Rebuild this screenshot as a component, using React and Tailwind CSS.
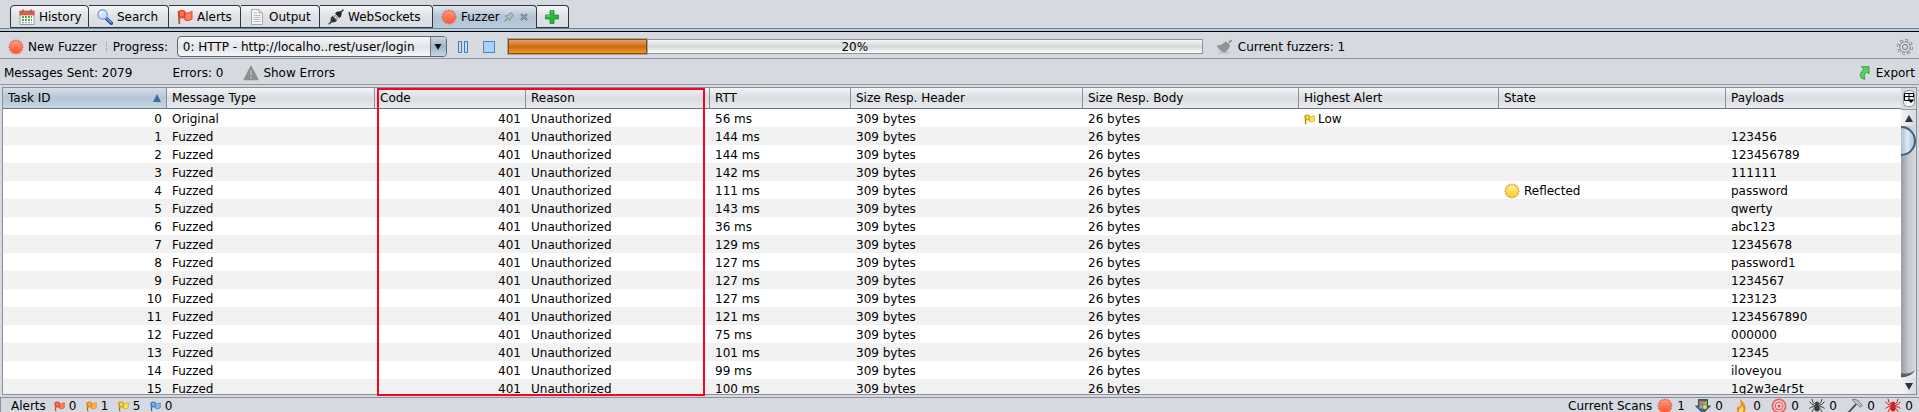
import React from "react";

const rows = [
  [0, "Original", 56, ""],
  [1, "Fuzzed", 144, "123456"],
  [2, "Fuzzed", 144, "123456789"],
  [3, "Fuzzed", 142, "111111"],
  [4, "Fuzzed", 111, "password"],
  [5, "Fuzzed", 143, "qwerty"],
  [6, "Fuzzed", 36, "abc123"],
  [7, "Fuzzed", 129, "12345678"],
  [8, "Fuzzed", 127, "password1"],
  [9, "Fuzzed", 127, "1234567"],
  [10, "Fuzzed", 127, "123123"],
  [11, "Fuzzed", 121, "1234567890"],
  [12, "Fuzzed", 75, "000000"],
  [13, "Fuzzed", 101, "12345"],
  [14, "Fuzzed", 99, "iloveyou"],
  [15, "Fuzzed", 100, "1q2w3e4r5t"],
];

const sunPoints = Array.from({ length: 32 }, (_, i) => {
  const r = i % 2 ? 6.2 : 8;
  const a = (i * Math.PI) / 16;
  return `${(8 + r * Math.cos(a)).toFixed(2)},${(8 + r * Math.sin(a)).toFixed(2)}`;
}).join(" ");

function Burst({ id, from, to, edge }) {
  return (
    <svg viewBox="0 0 16 16" className="size-4 shrink-0" aria-hidden="true">
      <defs>
        <linearGradient id={id} x1="0" y1="0" x2="0" y2="1">
          <stop offset="0" stopColor={from} />
          <stop offset="1" stopColor={to} />
        </linearGradient>
      </defs>
      <polygon points={sunPoints} fill={edge} />
      <circle cx="8" cy="8" r="5.9" fill={`url(#${id})`} />
    </svg>
  );
}

const RedBurst = ({ id }) => <Burst id={id} from="#ff9a80" to="#ff5534" edge="#e4664a" />;

function Flag({ light, dark, pole, className = "size-[11px]" }) {
  return (
    <svg viewBox="0 0 12 12" className={`shrink-0 ${className}`} aria-hidden="true">
      <path d="M1.2 1.5 1.8 11.2" stroke={pole} strokeWidth="1.3" fill="none" />
      <path d="M1.3 1.6Q3.5.2 6 1.6V7Q4 6 1.8 7.2Z" fill={dark} stroke={dark} strokeWidth=".6" />
      <path d="M6 2.8Q8 4 11.2 1.8V7.4Q8.6 9.4 6 8Z" fill={light} stroke={dark} strokeWidth=".8" />
      <path d="M2.4 2.3Q3.7 1.6 5 2.2V5.4Q3.6 5 2.6 5.6Z" fill={light} />
    </svg>
  );
}

const CalendarIcon = () => (
  <svg viewBox="0 0 16 16" className="size-4" aria-hidden="true">
    <rect x="1" y="3" width="14" height="12.5" fill="#fff" stroke="#7c8b94" strokeWidth=".8" />
    <rect x="1" y="2" width="14" height="4" fill="#e5604a" stroke="#b5392a" strokeWidth=".6" />
    <path d="M4 .5v3M12 .5v3" stroke="#6f7579" strokeWidth="1.6" />
    <path d="M3 8h10" stroke="#46b04c" strokeWidth="2" strokeDasharray="2 1" />
    <path d="M3 11h10" stroke="#46b04c" strokeWidth="2" strokeDasharray="2 1" />
    <path d="M3 13.6h10" stroke="#93a3ae" strokeWidth="1.4" strokeDasharray="2 1" />
  </svg>
);

const SearchIcon = () => (
  <svg viewBox="0 0 16 16" className="size-4" aria-hidden="true">
    <path d="M9.2 9.2 14.4 14.2" stroke="#174b91" strokeWidth="3.4" strokeLinecap="round" />
    <path d="M9.8 9.4 14.2 13.6" stroke="#6ca7e6" strokeWidth="1.4" strokeLinecap="round" />
    <circle cx="5.6" cy="5.4" r="4.6" fill="#c9e4fb" stroke="#8a9bdc" strokeWidth="1.4" />
    <path d="M3 5.5Q3.2 3 5.8 2.6" stroke="#fff" strokeWidth="1.3" fill="none" />
  </svg>
);

const PageIcon = () => (
  <svg viewBox="0 0 16 16" className="size-4" aria-hidden="true">
    <path d="M2.5.5H10l3.5 3.5v11.5h-11Z" fill="#f5f5f5" stroke="#a9a9a9" />
    <path d="M10 .5V4h3.5" fill="#ddd" stroke="#a9a9a9" />
    <path d="M4.5 4H8M4.5 6.5h7M4.5 8.5h7M4.5 10.5h7M4.5 12.5h7" stroke="#bdbdbd" />
  </svg>
);

const PlugIcon = () => (
  <svg viewBox="0 0 16 16" className="size-4" aria-hidden="true">
    <path d="M.8 15.2 4 12" stroke="#454545" strokeWidth="1.6" />
    <path d="M12 4 15.4.6" stroke="#454545" strokeWidth="1.6" />
    <path d="M3 8.6Q1.8 12 3 13T7.6 12.8L9 11.6 4.6 7Z" fill="#343434" />
    <path d="M7 4.6 11.4 9 13 7.6Q14.4 4.4 13.2 3T8.6 3Z" fill="#262626" />
    <path d="M5.2 6.6 7 8.4M7.8 9.2l1.6 1.6M6.6 5.8 10 9.4" stroke="#777" strokeWidth="1" />
  </svg>
);

const PinIcon = () => (
  <svg viewBox="0 0 10 10" className="size-[10px]" aria-hidden="true">
    <path d="M.6 9.4 3.6 6.4" stroke="#7d868d" strokeWidth="1.2" />
    <path d="M1.4 3.8 6 8.6 6.4 6.2 9.4 3.4 6.6.6 4 3.6Z" fill="#b7bcc0" stroke="#7d868d" strokeWidth=".9" />
  </svg>
);

const CloseIcon = () => (
  <svg viewBox="0 0 8 8" className="size-2" aria-hidden="true">
    <path d="M1 1 7 7M7 1 1 7" stroke="#737b82" strokeWidth="2.2" />
    <path d="M1.2 1.2 6.8 6.8M6.8 1.2 1.2 6.8" stroke="#a4abb0" strokeWidth=".8" />
  </svg>
);

const PlusIcon = () => (
  <svg viewBox="0 0 14 14" className="size-[14px]" aria-hidden="true">
    <path d="M5 .5h4V5h4.5v4H9v4.5H5V9H.5V5H5Z" fill="#27b53a" stroke="#17912b" strokeWidth=".8" />
    <path d="M6 1.5h2M1.5 6h4" stroke="#7fe08a" />
  </svg>
);

const WarnIcon = () => (
  <svg viewBox="0 0 16 16" className="size-4" aria-hidden="true">
    <path d="M8 1.6 14.6 14.4H1.4Z" fill="#8f8f8f" stroke="#8f8f8f" strokeWidth="1.6" strokeLinejoin="round" />
    <path d="M8 5.4v5M8 11.8v1.8" stroke="#b9b9b9" strokeWidth="1.8" />
  </svg>
);

const BroomIcon = () => (
  <svg viewBox="0 0 16 16" className="size-4" aria-hidden="true">
    <ellipse cx="8" cy="13.4" rx="6" ry="1.4" fill="#c3c5ca" />
    <path d="M12.6 4 15.4 1" stroke="#8b8b8b" strokeWidth="1.8" />
    <path d="M.5 6.4Q6 6.4 9.4 2.4L14 6.2Q13 11 8.2 13.6 3 11.4.5 6.4Z" fill="#949494" />
    <path d="M9 3.4 13.4 7" stroke="#777" strokeWidth="1" />
  </svg>
);

const GearIcon = () => (
  <svg viewBox="0 0 16 16" className="size-4" aria-hidden="true">
    <circle cx="8" cy="8" r="6.6" fill="none" stroke="#777" strokeWidth="2.6" strokeDasharray="2.9 2.28" />
    <circle cx="8" cy="8" r="6.6" fill="none" stroke="#dedede" strokeWidth="1.2" strokeDasharray="2.5 2.68" />
    <circle cx="8" cy="8" r="5.2" fill="#dedede" stroke="#858585" strokeWidth=".8" />
    <circle cx="8" cy="8" r="2.6" fill="#d6d9e0" stroke="#777" strokeWidth="1" />
  </svg>
);

const ExportIcon = () => (
  <svg viewBox="0 0 11 14" className="h-[14px] w-[11px]" aria-hidden="true">
    <path d="M2.5.7H10V8L7.8 5.8Q3.8 9 6 13.2.4 12.6 1.4 8.4 2 5.4 5 3.2Z" fill="#5fce62" stroke="#2c9a3c" strokeWidth=".9" />
  </svg>
);

const DownloadIcon = () => (
  <svg viewBox="0 0 16 16" className="size-4" aria-hidden="true">
    <path d="M3.5 1.5h9V8h3L8 15.2.5 8h3Z" fill="#4b5f7c" stroke="#2d3b50" strokeWidth=".8" />
    <path d="M4.4 3.5Q6.2 2.2 7.8 3.2V6.8H4.4Z" fill="#f0703a" />
    <path d="M8.2 3.4Q10 4.2 11.8 3V6.8H8.2Z" fill="#8ecb4a" />
    <path d="M4.4 7.2h3.4v3.6Q6 9.8 4.4 10.4Z" fill="#6cb0f2" />
    <path d="M8.2 7.2h3.6v3Q10 11.4 8.2 10.6Z" fill="#fbd843" />
  </svg>
);

const FlameIcon = () => (
  <svg viewBox="0 0 16 16" className="size-4" aria-hidden="true">
    <path d="M6.5.5Q13 6 12.6 11 12 15.6 8 15.6 3.4 15.2 3.8 11 4.2 9 5.6 7.4 6 9 7 9.4 8.6 5 6.5.5Z" fill="#f28a1c" />
    <path d="M8.8 7.6Q11 10.6 10.2 13 9.4 15 7.8 15 5.6 14.4 6 11.4 8.2 11.4 8.8 7.6Z" fill="#ffe27a" />
  </svg>
);

const TargetIcon = () => (
  <svg viewBox="0 0 16 16" className="size-4" aria-hidden="true">
    <circle cx="8" cy="8" r="6.6" fill="#fbe3e3" stroke="#e06468" strokeWidth="1.8" />
    <circle cx="8" cy="8" r="3.8" fill="none" stroke="#e4686c" strokeWidth="1.6" />
    <circle cx="8" cy="8" r="1.6" fill="#dd4a4f" />
  </svg>
);

const SpiderIcon = ({ color }) => (
  <svg viewBox="0 0 16 16" className="size-4" aria-hidden="true">
    <path
      d="M6.5 6.5 4 4.5 3 .8M9.5 6.5 12 4.5 13 .8M6.5 7.6 3 6.4 .6 3.6M9.5 7.6 13 6.4l2.4-2.8M6.5 8.8 3 8.8.4 10.4M9.5 8.8h3.5l2.6 1.6M6.5 10 4 11.6 2.6 15M9.5 10l2.5 1.6L13.4 15"
      stroke={color}
      fill="none"
    />
    <ellipse cx="8" cy="10" rx="2.6" ry="3.6" fill={color} />
    <circle cx="8" cy="5.4" r="2" fill={color} />
  </svg>
);

const HammerIcon = () => (
  <svg viewBox="0 0 16 16" className="size-4" aria-hidden="true">
    <path d="M1 15 9.6 5.6" stroke="#4a4a4a" strokeWidth="1.8" />
    <path d="M5 1.6Q9 .2 12 3.4L15.4 7.6 13 9.2 10.8 6.6 8.6 6.2Q8 3.6 5 1.6Z" fill="#bfc3c6" stroke="#6c7073" strokeWidth=".8" />
  </svg>
);

const ColumnsIcon = () => (
  <svg viewBox="0 0 12 17" className="h-[17px] w-3" aria-hidden="true">
    <rect x=".5" y=".5" width="11" height="16" rx="4" fill="#f5f5f7" stroke="#8b9099" />
    <path d="M1.5 3.5h9M1.5 6.5h9M1.5 3.5v7H7M6 3.5v7M10.5 3.5v4" stroke="#000" fill="none" />
    <path d="M4.5 9.5h7L8 13Z" fill="#000" />
  </svg>
);

const tabBase =
  "flex h-[23px] items-center rounded-tr-[4px] border-t border-r border-[#33353d] pl-2 text-[12px] leading-4 whitespace-nowrap";
const tabPlain = "bg-linear-to-b from-[#f4f5f7] via-[#dfe1e6] to-[#d9dce3]";

function Tab({ icon, label, className = "" }) {
  return (
    <button type="button" role="tab" aria-selected="false" className={`${tabBase} ${tabPlain} gap-1 border-b ${className}`}>
      {icon}
      {label}
    </button>
  );
}

const head =
  "h-[21px] border-r border-[#8b9099] px-[5px] py-0 text-left align-middle font-normal last:border-r-0";
const cell = "h-[18px] truncate px-[5px] pt-[2px] pb-0";

const red = { light: "#ff7e62", dark: "#e8452c", pole: "#b0552c" };
const orange = { light: "#ffb04a", dark: "#ee8410", pole: "#a8661c" };
const yellow = { light: "#ffe25c", dark: "#dca000", pole: "#a07414" };
const blue = { light: "#86b8ee", dark: "#3f7fc6", pole: "#345f94" };

const headings = ["Message Type", "Code", "Reason", "RTT", "Size Resp. Header", "Size Resp. Body", "Highest Alert", "State", "Payloads"];

const scans = [
  [<RedBurst id="scan-burst" />, 1, "Fuzzers"],
  [<DownloadIcon />, 0, "Forced browse"],
  [<FlameIcon />, 0, "Active scans"],
  [<TargetIcon />, 0, "Port scans"],
  [<SpiderIcon color="#3d3d3d" />, 0, "Spiders"],
  [<HammerIcon />, 0, "Brute force"],
  [<SpiderIcon color="#cc1f1f" />, 0, "Ajax spiders"],
];

export default function App() {
  return (
    <div className="flex h-screen flex-col overflow-hidden bg-[#d6d9e0] font-['DejaVu_Sans',sans-serif] text-[12px] leading-4 text-black">
      <nav role="tablist" className="flex shrink-0 items-end pt-[5px] pl-[10px]">
        <Tab icon={<CalendarIcon />} label="History" className="w-[79px] rounded-tl-[4px] border-l" />
        <Tab icon={<SearchIcon />} label="Search" className="w-20" />
        <Tab icon={<Flag {...red} className="size-4" />} label="Alerts" className="w-[72px]" />
        <Tab icon={<PageIcon />} label="Output" className="w-[79px]" />
        <Tab icon={<PlugIcon />} label="WebSockets" className="w-[113px]" />
        <div role="tab" aria-selected="true" className={`${tabBase} w-[104px] gap-1 bg-linear-to-b from-[#dfe6ee] via-[#b3c4d3] to-[#b6cbdc] pr-2`}>
          <RedBurst id="tab-burst" />
          Fuzzer
          <button type="button" aria-label="Pin tab" className="ml-auto"><PinIcon /></button>
          <button type="button" aria-label="Close tab" className="ml-[2px]"><CloseIcon /></button>
        </div>
        <button type="button" aria-label="Add tab" className={`${tabBase} ${tabPlain} w-8 border-b`}>
          <PlusIcon />
        </button>
      </nav>
      <div className="h-1 shrink-0 border-t border-b border-t-[#6f8397] border-b-black bg-[#b8cfe0]" />

      <div className="flex h-[27px] shrink-0 items-center border-b border-[#9297a1] pt-[3px] pr-[6px] pl-2">
        <button type="button" className="flex items-center gap-1">
          <RedBurst id="new-burst" />
          New Fuzzer
        </button>
        <span className="ml-[9px] h-[9px] border-l border-dotted border-[#8b9099]" />
        <label htmlFor="progress" className="ml-[6px] w-16">Progress:</label>
        <div className="grid h-[21px] w-[270px] items-center overflow-hidden rounded-[4px] border border-[#5f6570] bg-linear-to-b from-[#f8f8fa] via-[#e2e4e9] to-[#f4f5f8]">
          <select id="progress" className="col-start-1 row-start-1 h-[19px] w-full appearance-none bg-transparent pl-[5px] text-[12px]">
            <option>0: HTTP - http://localho..rest/user/login</option>
          </select>
          <span className="pointer-events-none col-start-1 row-start-1 flex h-[19px] w-4 items-center justify-center justify-self-end border-l border-[#6d7c8c] bg-linear-to-b from-[#c9d6e1] via-[#9fb3c5] to-[#c3d6e5]">
            <svg viewBox="0 0 8 6" className="h-[6px] w-2" aria-hidden="true"><path d="M.5 0h7L4 6Z" fill="#111" /></svg>
          </span>
        </div>
        <button type="button" aria-label="Pause" className="ml-[11px]">
          <svg viewBox="0 0 11 12" className="h-3 w-[11px]" aria-hidden="true">
            <path d="M.5.5h3v11h-3ZM6.5.5h3v11h-3Z" fill="#c4e0fc" stroke="#3d78b8" />
          </svg>
        </button>
        <button type="button" aria-label="Stop" className="ml-[14px]">
          <svg viewBox="0 0 12 12" className="size-3" aria-hidden="true">
            <rect x=".5" y=".5" width="11" height="11" fill="#a9d2fb" stroke="#4d84c4" />
          </svg>
        </button>
        <div role="progressbar" aria-label="Fuzzer progress" aria-valuenow={20} aria-valuemin={0} aria-valuemax={100} className="ml-3 grid h-[15px] w-[696px] grid-rows-[13px] items-center border border-[#8f939c] bg-linear-to-b from-[#f6f6f6] via-[#d6d7da] to-[#ffffff]">
          <span className="col-start-1 row-start-1 h-[15px] w-1/5 border border-[#8a4a0c] bg-linear-to-b from-[#e0a468] via-[#c86c0c] to-[#f0962c] shadow-[0_0_0_1px_#a8a4a0]" />
          <span className="col-start-1 row-start-1 text-center">20%</span>
        </div>
        <button type="button" aria-label="Clean" className="ml-[13px]"><BroomIcon /></button>
        <span className="ml-[6px]">Current fuzzers: 1</span>
        <button type="button" aria-label="Options" className="ml-auto"><GearIcon /></button>
      </div>

      <div className="flex h-[26px] shrink-0 items-center border-b border-[#9297a1] pt-[3px] pr-1 pl-1">
        <span>Messages Sent: 2079</span>
        <span className="ml-10">Errors: 0</span>
        <button type="button" className="ml-5 flex items-center gap-1"><WarnIcon />Show Errors</button>
        <button type="button" className="ml-auto flex items-center gap-[6px]"><ExportIcon />Export</button>
      </div>

      <main className="relative mx-[2px] mt-[2px] flex min-h-0 flex-1 border border-[#8b8f99]">
        <div className="min-w-0 flex-1 overflow-hidden bg-white">
          <table className="w-full table-fixed border-separate border-spacing-0">
            <colgroup>
              <col className="w-[164px]" />
              <col className="w-[208px]" />
              <col className="w-[151px]" />
              <col className="w-[184px]" />
              <col className="w-[141px]" />
              <col className="w-[232px]" />
              <col className="w-[216px]" />
              <col className="w-[200px]" />
              <col className="w-[227px]" />
              <col />
            </colgroup>
            <thead>
              <tr className="*:border-b *:border-b-[#6f747e]">
                <th scope="col" aria-sort="ascending" className={`${head} bg-linear-to-b from-[#d3dee7] via-[#b4c6d4] to-[#c6d8e4]`}>
                  <span className="flex items-center justify-between">
                    Task ID
                    <svg viewBox="0 0 8 8" className="size-2" aria-hidden="true"><path d="M4 0 8 8H0Z" fill="#3b6ea5" /></svg>
                  </span>
                </th>
                {headings.map((h) => (
                  <th key={h} scope="col" className={`${head} bg-linear-to-b from-[#f3f4f6] via-[#dadce1] to-[#e8ebf0]`}>{h}</th>
                ))}
              </tr>
            </thead>
            <tbody>
              {rows.map(([id, type, rtt, payload]) => (
                <tr key={id} className="even:bg-[#f2f2f2]">
                  <td className={`${cell} text-right`}>{id}</td>
                  <td className={cell}>{type}</td>
                  <td className={`${cell} text-right`}>401</td>
                  <td className={cell}>Unauthorized</td>
                  <td className={cell}>{rtt} ms</td>
                  <td className={cell}>309 bytes</td>
                  <td className={cell}>26 bytes</td>
                  <td className={cell}>
                    {id === 0 && <span className="flex items-center gap-[3px]"><Flag {...yellow} />Low</span>}
                  </td>
                  <td className={cell}>
                    {id === 4 && <span className="flex items-center gap-1"><Burst id="reflected" from="#fff0a0" to="#ffcc1c" edge="#d9a520" />Reflected</span>}
                  </td>
                  <td className={cell}>{payload}</td>
                </tr>
              ))}
            </tbody>
          </table>
        </div>
        <div className="flex w-[15px] shrink-0 flex-col items-center bg-[#d6d9e0]">
          <button type="button" aria-label="Choose columns" className="flex h-[21px] w-full items-center justify-center"><ColumnsIcon /></button>
          <button type="button" aria-label="Scroll up" className="flex h-[17px] w-full items-center justify-center border-t border-[#9297a1] bg-linear-to-r from-[#f4f5f7] to-[#d6d9e0]">
            <svg viewBox="0 0 8 7" className="h-[7px] w-2" aria-hidden="true"><path d="M4 0 8 7H0Z" fill="#333" /></svg>
          </button>
          <div className="flex w-full flex-1 flex-col justify-between bg-linear-to-r from-[#989ca5] via-[#c5c8cf] to-[#d6d9e0]">
            <div className="h-[30px] w-full rounded-r-full border-2 border-l-0 border-[#41607c] bg-linear-to-r from-[#a9c0d2] via-[#dbe9f3] to-[#a9c4da]" />
            <svg viewBox="0 0 15 8" className="h-2 w-full" aria-hidden="true">
              <path d="M0 3Q9 6 15 0V8H0Z" fill="#e6e8ec" />
              <path d="M0 3Q9 5 14 0 11 7 0 7.5Z" fill="#5c5f66" />
            </svg>
          </div>
          <button type="button" aria-label="Scroll down" className="flex h-4 w-full items-center justify-center bg-linear-to-r from-[#f4f5f7] to-[#d6d9e0]">
            <svg viewBox="0 0 8 7" className="h-[7px] w-2" aria-hidden="true"><path d="M0 0h8L4 7Z" fill="#333" /></svg>
          </button>
        </div>
        <div className="pointer-events-none absolute top-0 -bottom-[2px] left-[374px] w-[328px] border-2 border-[#ff0020]" />
      </main>

      <footer className="mt-[2px] flex h-[15px] shrink-0 items-start justify-between border-t border-l border-[#8b8f99] pt-[2px] pr-[6px] pl-[10px] leading-3">
        <div className="flex h-3 items-center">
          <span className="mr-2">Alerts</span>
          {[[red, 0, "High"], [orange, 1, "Medium"], [yellow, 5, "Low"], [blue, 0, "Informational"]].map(([c, n, t]) => (
            <span key={t} title={t} className="flex w-8 items-center gap-1"><Flag {...c} />{n}</span>
          ))}
        </div>
        <div className="flex h-3 items-center">
          <span className="mr-[5px]">Current Scans</span>
          {scans.map(([icon, n, t]) => (
            <span key={t} title={t} className="flex w-[38px] items-center gap-1 last:w-auto">{icon}{n}</span>
          ))}
        </div>
      </footer>
    </div>
  );
}
